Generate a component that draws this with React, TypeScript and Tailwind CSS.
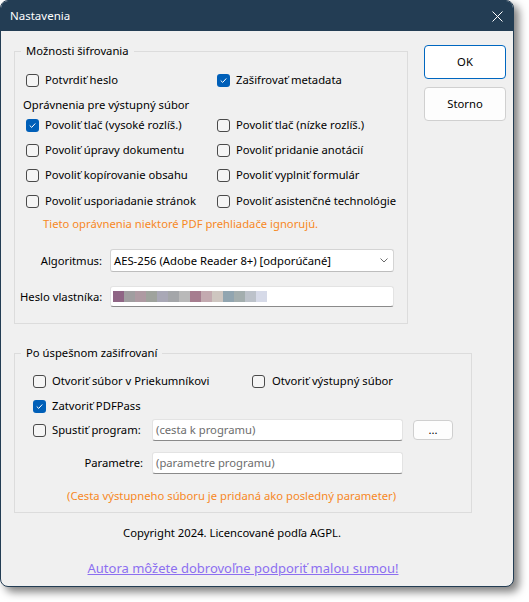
import React from "react";

function Box({ checked }: { checked?: boolean }) {
  if (checked) {
    return (
      <span className="flex h-[13px] w-[13px] shrink-0 items-center justify-center rounded-[3px] bg-[#005fb8]">
        <svg width="9" height="9" viewBox="0 0 9 9" fill="none">
          <path d="M2 4.8 L3.7 6.4 L7 2.8" stroke="#ffffff" strokeWidth="1" strokeLinecap="round" strokeLinejoin="round" />
        </svg>
      </span>
    );
  }
  return <span className="h-[13px] w-[13px] shrink-0 rounded-[3px] border border-[#4a4a4a] bg-[#f5f5f5]" />;
}

function Check({ label, checked, className = "" }: { label: string; checked?: boolean; className?: string }) {
  return (
    <div className={"flex items-center gap-[6px] " + className}>
      <Box checked={checked} />
      <span className="whitespace-nowrap">{label}</span>
    </div>
  );
}

const pw = [
  "#8f6585", "#a09ea0", "#ae9aa2", "#9fa39d", "#a9a8b6", "#a4a6a9", "#b9b9b9",
  "#a67d8f", "#c3aab0", "#cec6c0", "#91a5b0", "#a3aeae", "#bcc2ca", "#d6dae8",
];

export default function App() {
  return (
    <div className="h-[602px] w-[529px] bg-white font-['Noto_Sans',sans-serif] text-[11.25px] leading-[16px] text-black">
      <div className="flex h-[587px] w-[514px] flex-col overflow-hidden rounded-[8px] border border-[#233d54] bg-[#f0f0f0] shadow-[5px_5px_9px_rgba(0,0,0,0.5)]">
        {/* title bar */}
        <div className="flex h-[30px] shrink-0 items-center justify-between bg-[#233d54] pl-[9px] pr-[10px] text-white">
          <span className="text-[11.5px]">Nastavenia</span>
          <svg width="11" height="11" viewBox="0 0 11 11" fill="none">
            <path d="M0.5 0.5 L10.5 10.5 M10.5 0.5 L0.5 10.5" stroke="#ffffff" strokeWidth="1" />
          </svg>
        </div>

        {/* body */}
        <div className="flex flex-1 flex-col pl-[13px] pt-[12px]">
          <div className="flex items-start">
            <fieldset className="w-[394px] border border-[#dcdcdc]">
              <legend className="ml-[6px] px-[5px] leading-[16px]">Možnosti šifrovania</legend>
              <div className="pb-[16px] pl-[11px]">
                <div className="mt-[13px] flex h-[16px] items-center">
                  <div className="w-[191px]">
                    <Check label="Potvrdiť heslo" />
                  </div>
                  <Check label="Zašifrovať metadata" checked />
                </div>
                <div className="ml-[-3px] mt-[9px] h-[16px]">Oprávnenia pre výstupný súbor</div>
                <div className="mt-[4px] flex h-[16px] items-center">
                  <div className="w-[191px]">
                    <Check label="Povoliť tlač (vysoké rozlíš.)" checked />
                  </div>
                  <Check label="Povoliť tlač (nízke rozlíš.)" />
                </div>
                <div className="mt-[9px] flex h-[16px] items-center">
                  <div className="w-[191px]">
                    <Check label="Povoliť úpravy dokumentu" />
                  </div>
                  <Check label="Povoliť pridanie anotácií" />
                </div>
                <div className="mt-[9px] flex h-[16px] items-center">
                  <div className="w-[191px]">
                    <Check label="Povoliť kopírovanie obsahu" />
                  </div>
                  <Check label="Povoliť vyplniť formulár" />
                </div>
                <div className="mt-[10px] flex h-[16px] items-center">
                  <div className="w-[191px]">
                    <Check label="Povoliť usporiadanie stránok" />
                  </div>
                  <Check label="Povoliť asistenčné technológie" />
                </div>
                <div className="mt-[7px] h-[16px] pl-[17px] text-[#f7881f]">
                  Tieto oprávnenia niektoré PDF prehliadače ignorujú.
                </div>
                <div className="ml-[-6px] mt-[17px] flex h-[23px] items-center">
                  <div className="w-[82px] text-right">Algoritmus:</div>
                  <div className="ml-[8px] flex h-[23px] w-[284px] items-center justify-between rounded-[3px] border border-[#d4d4d4] border-b-[#bdbdbd] bg-white pl-[3px] pr-[5px]">
                    <span className="whitespace-nowrap">AES-256 (Adobe Reader 8+) [odporúčané]</span>
                    <svg width="8" height="5" viewBox="0 0 8 5" fill="none">
                      <path d="M0.5 0.5 L4 4 L7.5 0.5" stroke="#6a6a6a" strokeWidth="1" />
                    </svg>
                  </div>
                </div>
                <div className="ml-[-6px] mt-[14px] flex h-[21px] items-center">
                  <div className="w-[82px] whitespace-nowrap text-right">Heslo vlastníka:</div>
                  <div className="ml-[8px] flex h-[21px] w-[284px] items-center rounded-[3px] border border-[#e3e3e3] border-b-[#8a8a8a] bg-white pl-[2px]">
                    {pw.map((c, i) => (
                      <span key={i} className="h-[11px] w-[11px]" style={{ backgroundColor: c }} />
                    ))}
                  </div>
                </div>
              </div>
            </fieldset>

            <div className="ml-[16px] mt-[2px] flex flex-col gap-[8px]">
              <button className="flex h-[34px] w-[82px] items-center justify-center rounded-[4px] border border-[#0067c0] bg-white">
                OK
              </button>
              <button className="flex h-[34px] w-[82px] items-center justify-center rounded-[4px] border border-[#d0d0d0] bg-[#fdfdfd]">
                Storno
              </button>
            </div>
          </div>

          <fieldset className="mt-[21px] w-[458px] border border-[#dcdcdc]">
            <legend className="ml-[6px] px-[5px] leading-[16px]">Po úspešnom zašifrovaní</legend>
            <div className="pb-[8px] pl-[18px]">
              <div className="mt-[12px] flex h-[16px] items-center">
                <div className="w-[219px]">
                  <Check label="Otvoriť súbor v Priekumníkovi" />
                </div>
                <Check label="Otvoriť výstupný súbor" className="gap-[7px]" />
              </div>
              <Check label="Zatvoriť PDFPass" checked className="mt-[9px] h-[16px]" />
              <div className="mt-[5px] flex h-[22px] items-center">
                <div className="w-[119px]">
                  <Check label="Spustiť program:" />
                </div>
                <div className="flex h-[22px] w-[251px] items-center rounded-[3px] border border-[#e3e3e3] border-b-[#8a8a8a] bg-white pl-[3px] text-[#6d6d6d]">
                  (cesta k programu)
                </div>
                <button className="ml-[10px] flex h-[20px] w-[40px] items-center justify-center rounded-[4px] border border-[#cfcfcf] bg-[#fdfdfd] leading-[10px]">
                  ...
                </button>
              </div>
              <div className="mt-[11px] flex h-[22px] items-center">
                <div className="w-[110px] text-right">Parametre:</div>
                <div className="ml-[9px] flex h-[22px] w-[251px] items-center rounded-[3px] border border-[#e3e3e3] border-b-[#8a8a8a] bg-white pl-[3px] text-[#6d6d6d]">
                  (parametre programu)
                </div>
              </div>
              <div className="ml-[34px] mt-[14px] h-[16px] whitespace-nowrap text-[#f7881f]">
                (Cesta výstupneho súboru je pridaná ako posledný parameter)
              </div>
            </div>
          </fieldset>

          <div className="mt-[12px] h-[16px] w-[436px] text-center">Copyright 2024. Licencované podľa AGPL.</div>
          <div className="mt-[19px] h-[16px] w-[458px] text-center text-[13px] leading-[16px]">
            <span className="text-[#8c6ff0] underline">Autora môžete dobrovoľne podporiť malou sumou!</span>
          </div>
        </div>
      </div>
    </div>
  );
}
